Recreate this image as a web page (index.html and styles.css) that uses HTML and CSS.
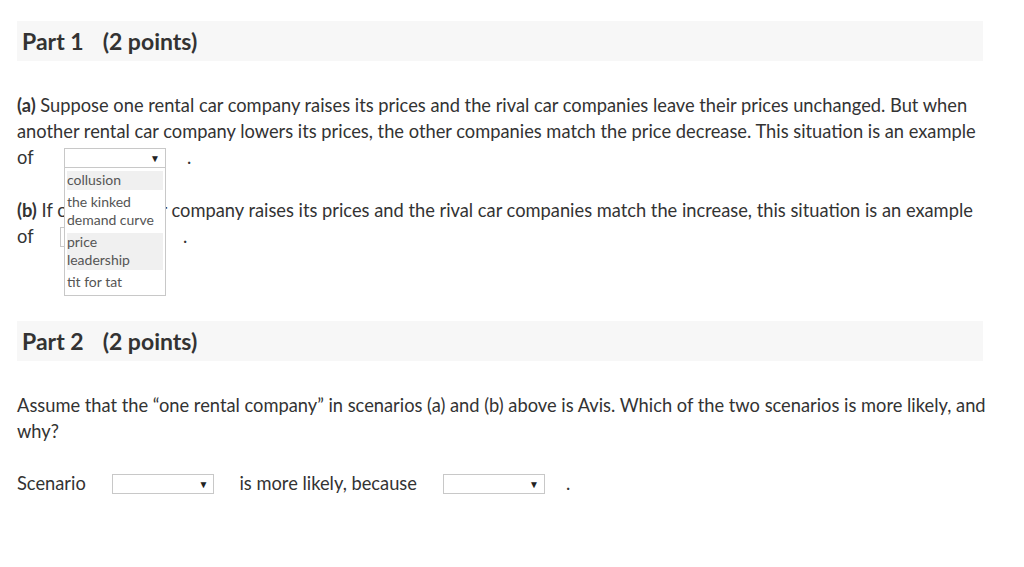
FILE: index.html
```html
<!DOCTYPE html>
<html>
<head>
<meta charset="utf-8">
<link rel="stylesheet" href="styles.css">
</head>
<body>
<div class="page">
  <h2 class="part"><span class="part-num">Part 1</span><span class="pts">(2 points)</span></h2>
  <p class="q q-first"><b>(a)</b> Suppose one rental car company raises its prices and the rival car companies leave their prices unchanged. But when another rental car company lowers its prices, the other companies match the price decrease. This situation is an example of <span class="sel-wrap sel-a"><span class="sel"><span class="arrow">▼</span></span><span class="list"><span class="opt hl">collusion</span><span class="opt">the kinked demand curve</span><span class="opt hl">price leadership</span><span class="opt">tit for tat</span></span></span><span class="dot">.</span></p>
  <p class="q"><b>(b)</b> If one rental car company raises its prices and the rival car companies match the increase, this situation is an example of <span class="sel-wrap sel-b"><span class="sel"><span class="arrow">▼</span></span></span><span class="dot">.</span></p>
  <h2 class="part part2"><span class="part-num">Part 2</span><span class="pts">(2 points)</span></h2>
  <p class="q q-first">Assume that the “one rental company” in scenarios (a) and (b) above is Avis. Which of the two scenarios is more likely, and why?</p>
  <p class="q scen">Scenario <span class="sel-wrap sel-c"><span class="sel"><span class="arrow">▼</span></span></span><span class="mid">is more likely, because</span><span class="sel-wrap sel-d"><span class="sel"><span class="arrow">▼</span></span></span><span class="dot">.</span></p>
</div>
</body>
</html>
```
FILE: styles.css
```css
html, body {
  margin: 0;
  padding: 0;
  background: #fff;
}
.page {
  width: 966px;
  padding: 21px 17px;
  font-family: Lato, "Open Sans", sans-serif;
  color: #333;
}
.part {
  margin: 0;
  height: 40px;
  line-height: 40px;
  background: #f7f7f7;
  padding-left: 5px;
  font-size: 23px;
  font-weight: 700;
  color: #333;
}
.pts {
  margin-left: 19px;
}
.part2 {
  margin-top: 72px;
}
.q {
  margin: 27px -6px 0 0;
  font-size: 18.3px;
  line-height: 26px;
}
.q b {
  font-weight: 700;
}
.q-first {
  margin-top: 31px;
}
.scen {
  margin-top: 26px;
}
.sel-wrap {
  position: relative;
  display: inline-block;
  vertical-align: top;
  height: 26px;
}
.sel {
  display: block;
  box-sizing: border-box;
  width: 102px;
  height: 20px;
  margin-top: 4px;
  border: 1px solid #c8c8c8;
  background: #fff;
  position: relative;
}
.arrow {
  position: absolute;
  right: 5px;
  top: 4px;
  font-size: 10px;
  line-height: 10px;
  color: #222;
}
.sel-a {
  margin-left: 26px;
}
.sel-b {
  margin-left: 22px;
}
.sel-c {
  margin-left: 22px;
}
.sel-d {
  margin-left: 26px;
}
.mid {
  margin-left: 25px;
}
.dot {
  margin-left: 21px;
}
.list {
  position: absolute;
  left: 0;
  top: 24px;
  width: 102px;
  box-sizing: border-box;
  border: 1px solid #c8c8c8;
  border-top: none;
  background: #fff;
  padding: 3px 2px 4px 2px;
  display: flex;
  flex-direction: column;
  gap: 3px;
  z-index: 5;
}
.opt {
  display: block;
  font-size: 14px;
  line-height: 18.5px;
  color: #555;
  padding-left: 0;
}
.opt.hl {
  background: #f0f0f0;
}
```
